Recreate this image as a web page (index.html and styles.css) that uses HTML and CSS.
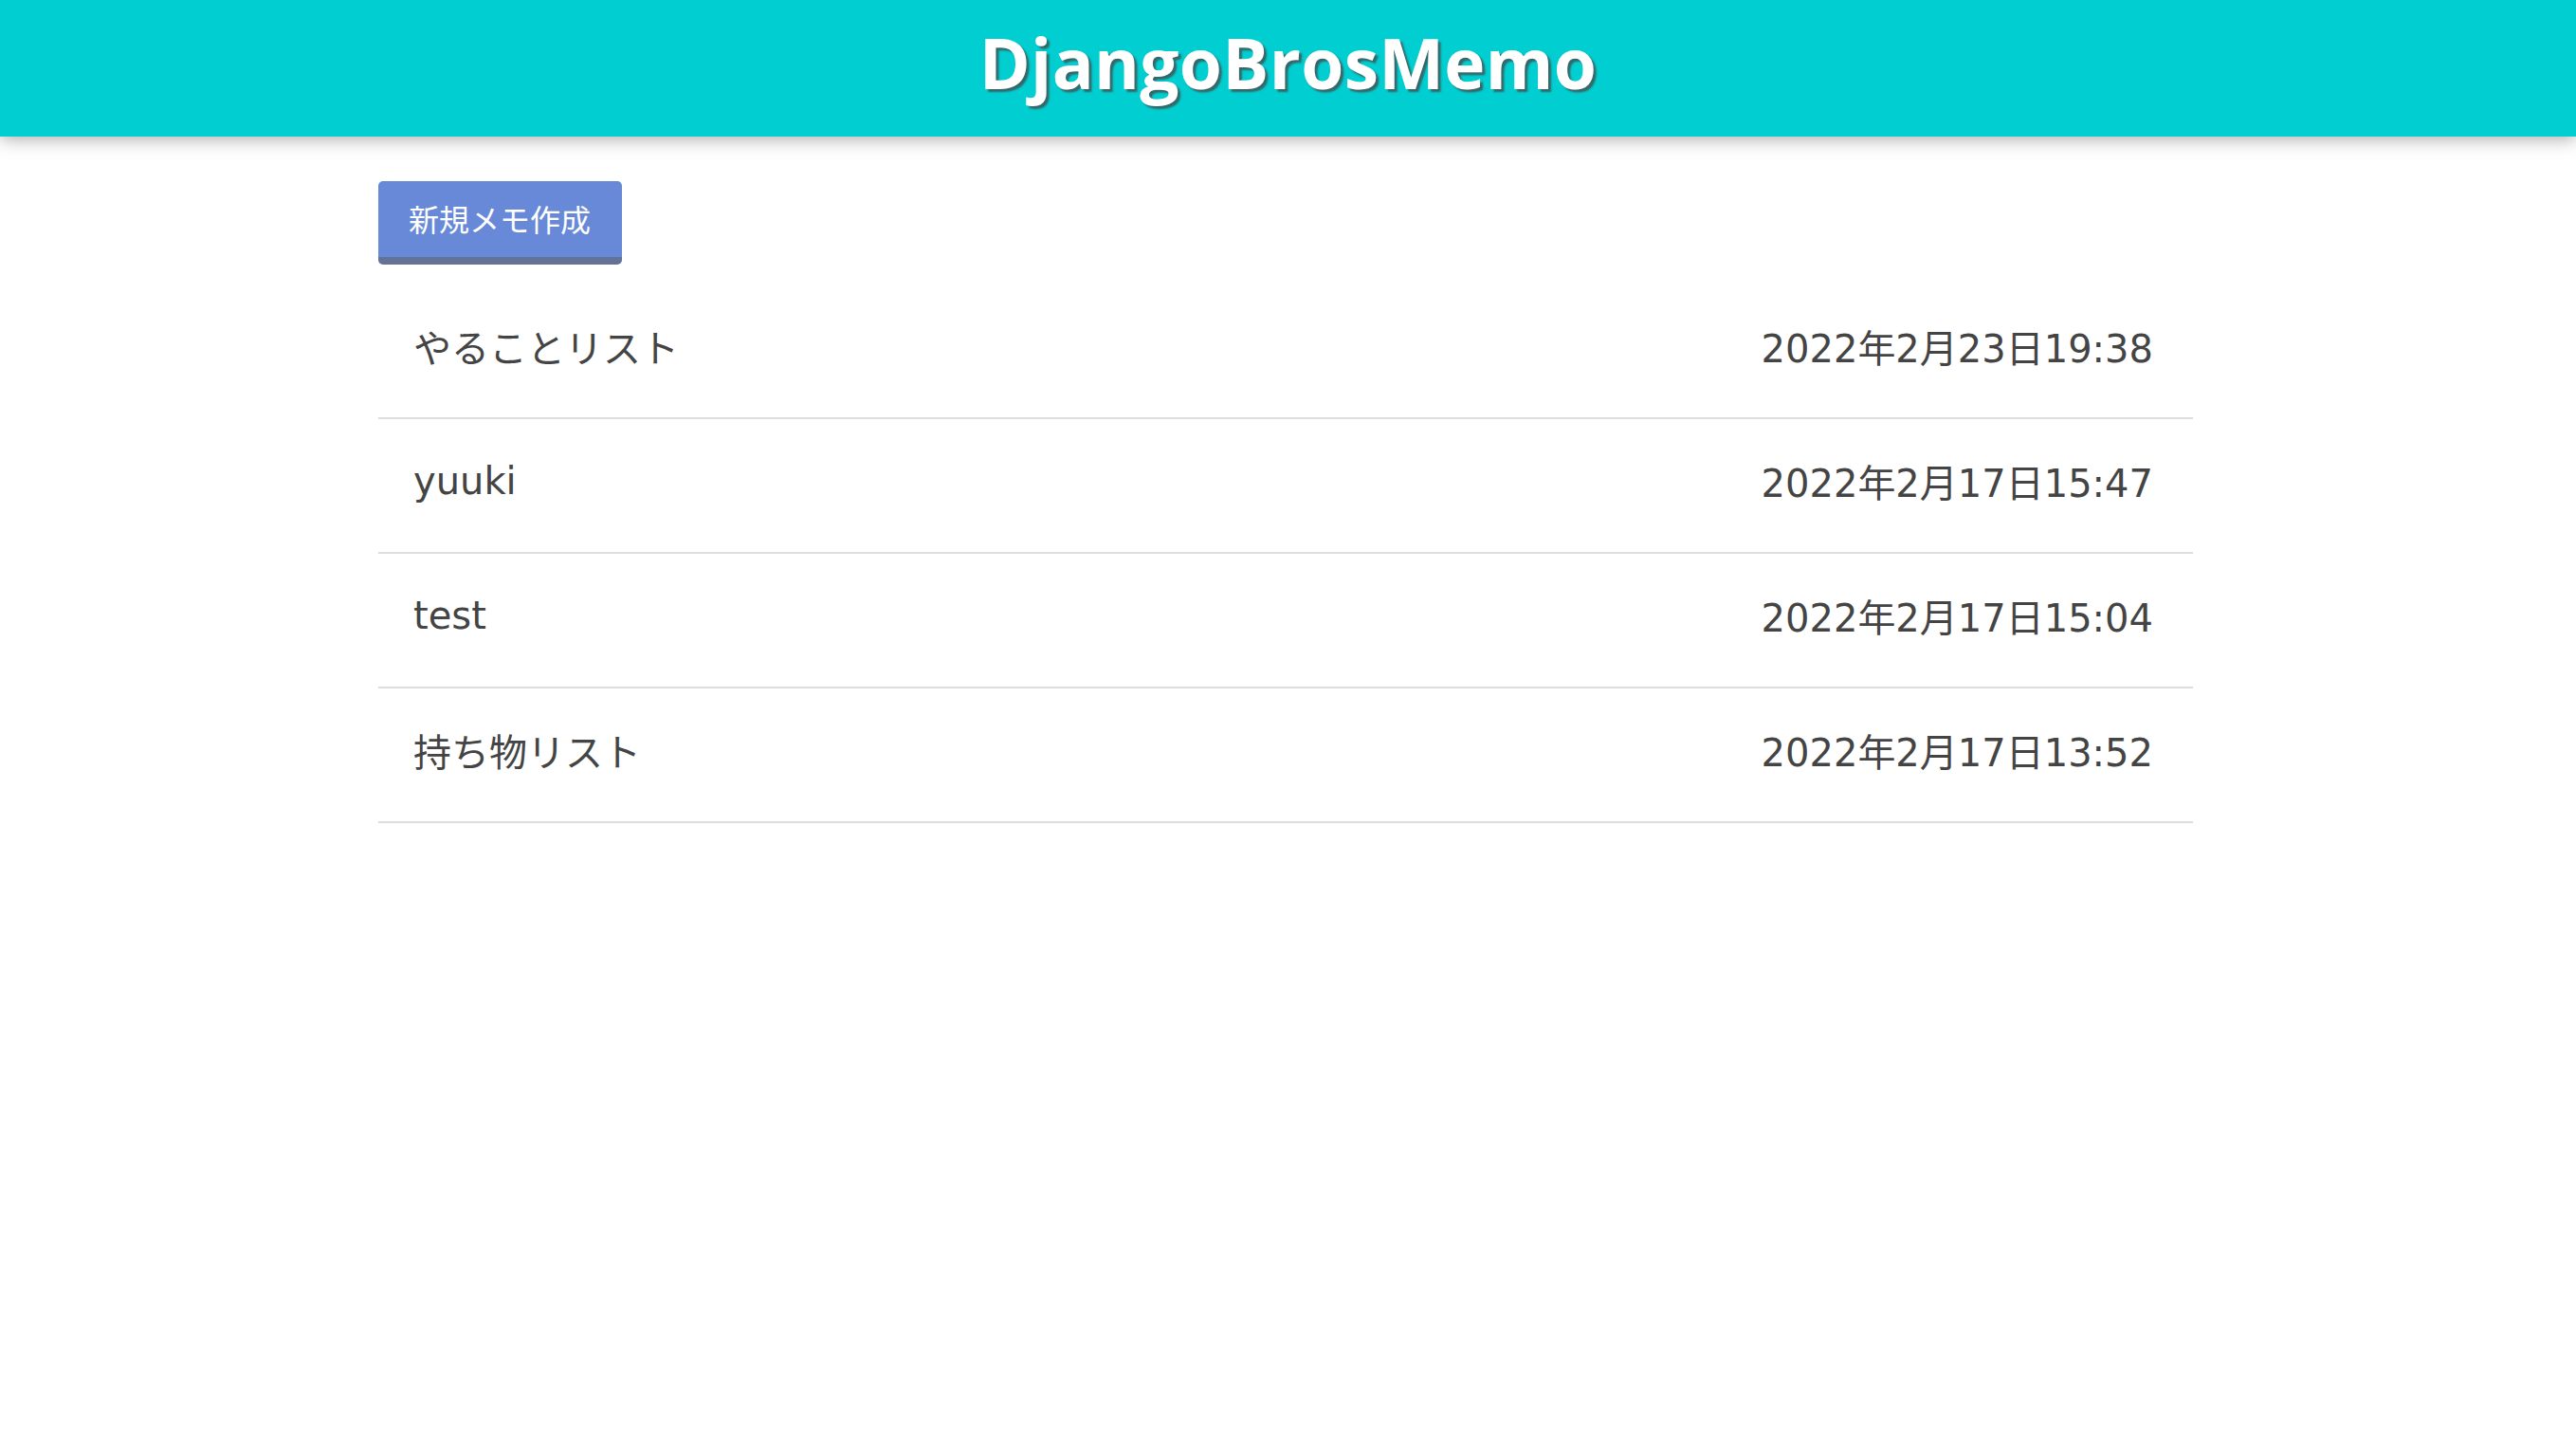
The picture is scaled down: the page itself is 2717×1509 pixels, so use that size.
FILE: index.html
```html
<!DOCTYPE html>
<html lang="ja">
<head>
<meta charset="utf-8">
<title>DjangoBrosMemo</title>
<link rel="stylesheet" href="styles.css">
</head>
<body>
<header class="site-header">
  <h1 class="site-title">DjangoBrosMemo</h1>
</header>
<main class="content">
  <a class="btn-new" href="#">新規メモ作成</a>
  <ul class="memo-list">
    <li class="memo-row"><span class="memo-title">やることリスト</span><span class="memo-date">2022年2月23日19:38</span></li>
    <li class="memo-row"><span class="memo-title">yuuki</span><span class="memo-date">2022年2月17日15:47</span></li>
    <li class="memo-row"><span class="memo-title">test</span><span class="memo-date">2022年2月17日15:04</span></li>
    <li class="memo-row"><span class="memo-title">持ち物リスト</span><span class="memo-date">2022年2月17日13:52</span></li>
  </ul>
</main>
</body>
</html>
```

FILE: styles.css
```css
html, body {
  margin: 0;
  padding: 0;
  background: #ffffff;
}

body {
  font-family: "DejaVu Sans", "Noto Sans CJK JP", sans-serif;
  color: #444444;
}

.site-header {
  height: 144px;
  background: #00ced1;
  box-shadow: 0 2px 18px rgba(0, 0, 0, 0.35);
  display: flex;
  align-items: center;
  justify-content: center;
  position: relative;
  z-index: 1;
}

.site-title {
  margin: 0;
  font-family: "Open Sans", "Noto Sans CJK JP", sans-serif;
  font-weight: 700;
  font-size: 73px;
  letter-spacing: 0.3px;
  line-height: 1;
  color: #ffffff;
  text-shadow: 3px 3px 2px rgba(70, 70, 70, 0.75);
  transform: translateY(-7px);
}

.content {
  width: 1914px;
  margin: 47px 0 0 399px;
}

.btn-new {
  display: inline-block;
  box-sizing: border-box;
  height: 88px;
  padding: 0 33px 0 32px;
  line-height: 78px;
  background: #6889d8;
  border-bottom: 8px solid #637296;
  border-radius: 5px;
  color: #ffffff;
  text-decoration: none;
  font-family: "Noto Sans CJK JP", sans-serif;
  font-size: 32px;
}

.memo-list {
  list-style: none;
  margin: 21px 0 0 0;
  padding: 0;
}

.memo-row {
  box-sizing: border-box;
  height: 142px;
  border-bottom: 2px solid #dddddd;
  display: flex;
  align-items: center;
  justify-content: space-between;
  padding: 0 42px 10px 37px;
  font-size: 40px;
}
```
